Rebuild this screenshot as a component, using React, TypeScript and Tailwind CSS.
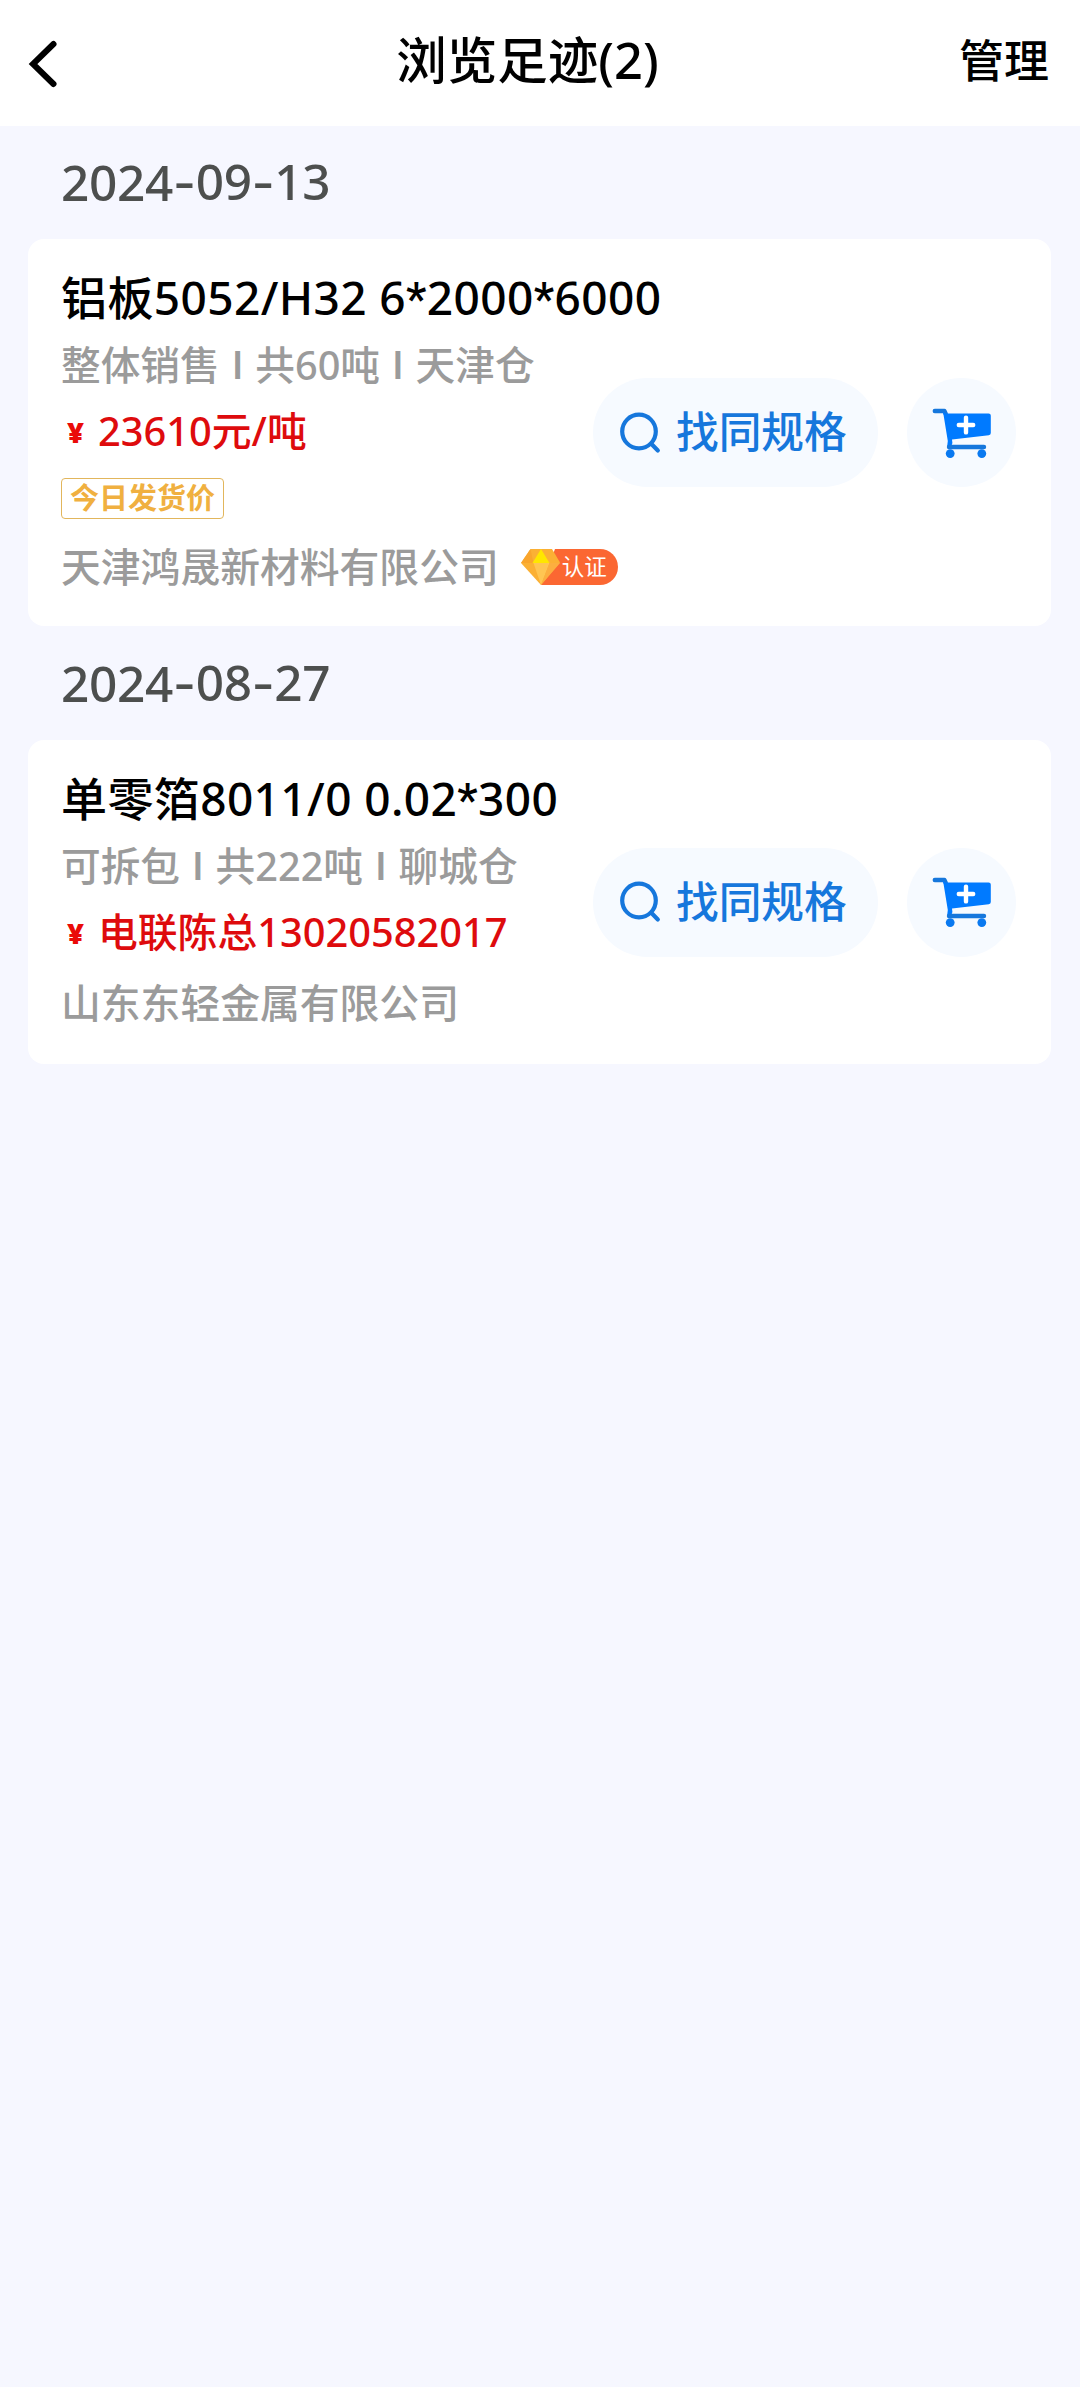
type Footprint = {
    title: string;
    meta: string[];
    price: string;
    tag?: string;
    company: string;
    certified?: boolean;
};

type FootprintGroup = {
    date: string;
    items: Footprint[];
};

const FOOTPRINTS: FootprintGroup[] = [
    {
        date: "2024-09-13",
        items: [
            {
                title: "铝板5052/H32 6*2000*6000",
                meta: ["整体销售", "共60吨", "天津仓"],
                price: "23610元/吨",
                tag: "今日发货价",
                company: "天津鸿晟新材料有限公司",
                certified: true,
            },
        ],
    },
    {
        date: "2024-08-27",
        items: [
            {
                title: "单零箔8011/0 0.02*300",
                meta: ["可拆包", "共222吨", "聊城仓"],
                price: "电联陈总13020582017",
                company: "山东东轻金属有限公司",
            },
        ],
    },
];

const BackIcon = () => (
    <svg className="h-[50px] w-[32px]" viewBox="0 0 32 50" fill="none">
        <path d="M26.500 5 6 25l20.500 20" stroke="#000" strokeWidth="6" strokeLinecap="round" />
    </svg>
);

const SearchIcon = () => (
    <svg className="h-[42px] w-[42px]" viewBox="0 0 42 42" fill="none" stroke="#1677dc" strokeWidth="4.2">
        <circle cx="19" cy="19.5" r="16.8" />
        <path d="m31.500 32 6.300 6.500" strokeLinecap="round" />
    </svg>
);

const CartIcon = () => (
    <svg className="h-[50px] w-[60px]" viewBox="0 0 60 50" fill="none">
        <path d="M2.8 3h9.6l1.4 3" stroke="#1677dc" strokeWidth="4.4" strokeLinecap="round" strokeLinejoin="round" />
        <path
            d="M11 3.4 13.2 5.4H56.6a2.2 2.2 0 0 1 2.2 2.2V25a2.2 2.2 0 0 1-2 2.2L20 31.6l.4 3.4-1.2 3.4-4-.2.6-5.2Z"
            fill="#007aff"
        />
        <path d="M17 39h35" stroke="#1677dc" strokeWidth="4.4" strokeLinecap="round" />
        <circle cx="18.2" cy="45.6" r="4.4" fill="#0a79f0" />
        <circle cx="49.8" cy="45.6" r="4.4" fill="#0a79f0" />
        <path d="M34 9.6v14.8M26.8 17h14.4" stroke="#fff" strokeWidth="4.4" strokeLinecap="round" />
    </svg>
);

const CertifiedBadge = () => (
    <div className="ml-[22px] flex h-9 items-center">
        <svg className="h-9 w-[40px]" viewBox="0 0 40 36">
            <path d="M34 0h7v36H20Z" fill="#fb6732" />
            <path d="M9.5 0H31l8 13.5L20 36 0 14Z" fill="#fbb034" />
            <path d="M9.5 0 0 14h12.5Z" fill="#f9a52c" />
            <path d="m20 0-8.500 14h17Z" fill="#ffe600" />
            <path d="M12.500 14h16L20 36Z" fill="#ffc552" />
            <path d="M28.500 14H39L20 36Z" fill="#fcae3f" />
        </svg>
        <span className="flex h-9 w-[57px] items-center rounded-r-full bg-[#fb6732] pl-[1px] text-[22.5px] leading-9 font-normal text-white">
            认证
        </span>
    </div>
);

const DateHeading = ({ date }: { date: string }) => (
    <h2 className="flex h-[113px] items-center pl-[61px] text-[49.5px] leading-none font-medium tracking-[-0.3px] text-[#4d4f4e]">
        {date.split("-").map((part, index) => (
            <span key={part}>
                {index > 0 && <span className="relative top-px font-['Inter']">-</span>}
                {part}
            </span>
        ))}
    </h2>
);

const FootprintCard = ({ item }: { item: Footprint }) => (
    <article className="mr-[29px] mb-px ml-[28px] flex items-center rounded-[16px] bg-white pl-[33px]">
        <div className={`w-[532px] shrink-0 pt-[28px] whitespace-nowrap ${item.tag ? "pb-[29px]" : "pb-[31px]"}`}>
            <h3 className="text-[46px] leading-[60px] font-medium tracking-[0.4px] text-black">
                {item.title.split("*").map((part, index) => (
                    <span key={index}>
                        {index > 0 && <span className="font-['Roboto']">*</span>}
                        {part}
                    </span>
                ))}
            </h3>
            <p className="flex h-[73px] items-center text-[39.7px] font-medium text-[#9b9b9b]">
                {item.meta.map((text, index) => (
                    <span key={text} className="flex items-center">
                        {index > 0 && <span className="w-[35.5px] text-center font-['Roboto']">I</span>}
                        {text}
                    </span>
                ))}
            </p>
            <p className="flex h-[57px] items-center text-[39.8px] font-medium text-[#de0b0d]">
                <span className="w-[37px] pt-[2px] pl-[6px] text-[29px] font-black text-[#ea0b08]">¥</span>
                {item.price}
            </p>
            {item.tag && (
                <div className="mt-[19px] mb-[18px] flex">
                    <span className="h-[41px] rounded-[4px] border border-[#e2b65c] px-[8px] text-[29px] leading-[37px] font-bold text-[#f0b040]">
                        {item.tag}
                    </span>
                </div>
            )}
            <div className="mt-[13px] flex h-[60px] items-center text-[39.8px] font-medium text-[#9b9b9b]">
                {item.company}
                {item.certified && <CertifiedBadge />}
            </div>
        </div>
        <button
            type="button"
            className="flex h-[109px] w-[285px] shrink-0 items-center gap-[14px] rounded-full bg-[#f6faff] pl-[27px] text-[42.7px] leading-none font-medium whitespace-nowrap text-[#1677dc]"
        >
            <SearchIcon />
            找同规格
        </button>
        <button
            type="button"
            className="ml-[29px] flex size-[109px] shrink-0 items-center justify-center rounded-full bg-[#f6faff]"
        >
            <CartIcon />
        </button>
    </article>
);

export default function App() {
    return (
        <div className="min-h-[2387px] w-full bg-[#f6f7ff] font-['Noto_Sans','Noto_Sans_CJK_SC',sans-serif]">
            <header className="grid h-[126px] grid-cols-[1fr_auto_1fr] items-center bg-white px-[27px] text-black">
                <button type="button" className="pt-[2px]">
                    <BackIcon />
                </button>
                <h1 className="-ml-[25px] pb-[6px] text-[50.5px] leading-[60px] font-medium">浏览足迹(2)</h1>
                <button type="button" className="pr-[4px] pb-[5px] text-right text-[45px] leading-[60px] font-medium">
                    管理
                </button>
            </header>
            <main>
                {FOOTPRINTS.map((group) => (
                    <section key={group.date}>
                        <DateHeading date={group.date} />
                        {group.items.map((item) => (
                            <FootprintCard key={item.title} item={item} />
                        ))}
                    </section>
                ))}
            </main>
        </div>
    );
}
